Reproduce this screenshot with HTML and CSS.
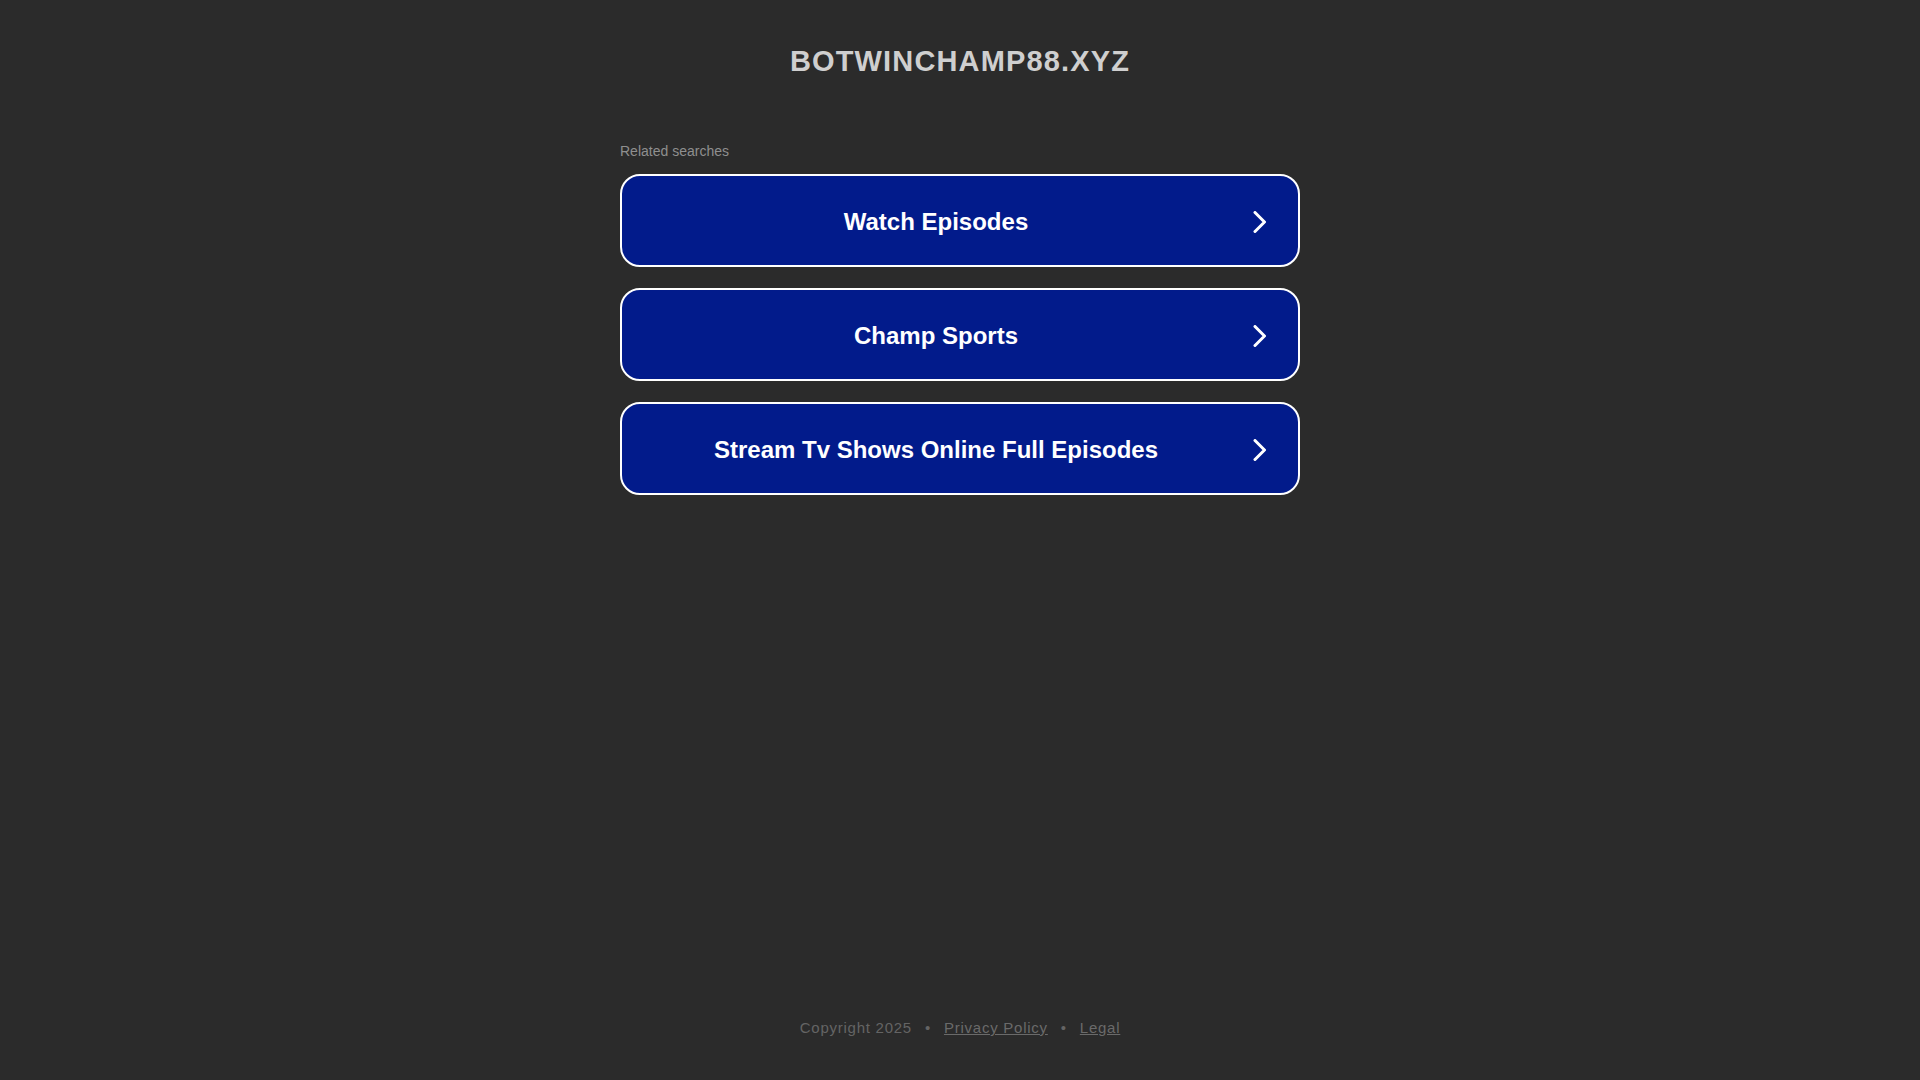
FILE: index.html
```html
<!DOCTYPE html>
<html lang="en">
<head>
<meta charset="utf-8">
<title>botwinchamp88.xyz</title>
<link rel="stylesheet" href="styles.css">
</head>
<body>
<div class="page">
  <header class="header">
    <h1 class="domain">BOTWINCHAMP88.XYZ</h1>
  </header>
  <main class="main">
    <div class="related">Related searches</div>
    <ul class="list">
      <li><a class="item" href="#"><span class="item-text">Watch Episodes</span><svg class="chev" viewBox="0 0 16 22" width="16" height="22"><path d="M3 1.5 L12.5 11 L3 20.5" fill="none" stroke="#fff" stroke-width="3" stroke-linecap="round" stroke-linejoin="round"/></svg></a></li>
      <li><a class="item" href="#"><span class="item-text">Champ Sports</span><svg class="chev" viewBox="0 0 16 22" width="16" height="22"><path d="M3 1.5 L12.5 11 L3 20.5" fill="none" stroke="#fff" stroke-width="3" stroke-linecap="round" stroke-linejoin="round"/></svg></a></li>
      <li><a class="item" href="#"><span class="item-text">Stream Tv Shows Online Full Episodes</span><svg class="chev" viewBox="0 0 16 22" width="16" height="22"><path d="M3 1.5 L12.5 11 L3 20.5" fill="none" stroke="#fff" stroke-width="3" stroke-linecap="round" stroke-linejoin="round"/></svg></a></li>
    </ul>
  </main>
  <footer class="footer">
    <span class="copy">Copyright 2025</span>
    <span class="dot">•</span>
    <a class="flink" href="#">Privacy Policy</a>
    <span class="dot">•</span>
    <a class="flink" href="#">Legal</a>
  </footer>
</div>
</body>
</html>
```
FILE: styles.css
```css
html, body {
  margin: 0;
  padding: 0;
  background: #2b2b2b;
}
body {
  font-family: "Liberation Sans", Arial, sans-serif;
}
.page {
  min-height: 100vh;
  display: flex;
  flex-direction: column;
}
.header {
  padding-top: 43px;
  text-align: center;
}
.domain {
  margin: 0;
  font-size: 29px;
  line-height: 36px;
  font-weight: bold;
  letter-spacing: 1.15px;
  color: #cfcfcf;
}
.main {
  width: 680px;
  margin: 64px auto 0;
  flex: 1;
}
.related {
  font-size: 14px;
  line-height: 16px;
  color: #8f8f8f;
  margin-bottom: 15px;
}
.list {
  list-style: none;
  margin: 0;
  padding: 0;
  display: flex;
  flex-direction: column;
  gap: 21px;
}
.item {
  display: flex;
  align-items: center;
  box-sizing: border-box;
  height: 93px;
  padding: 2px 30px 0 24px;
  background: #021b8b;
  border: 2px solid #ffffff;
  border-radius: 20px;
  text-decoration: none;
  color: #ffffff;
}
.item-text {
  flex: 1;
  text-align: center;
  font-size: 24px;
  line-height: 28px;
  font-weight: bold;
  margin-right: 26px;
}
.chev {
  flex: none;
  display: block;
}
.footer {
  display: flex;
  justify-content: center;
  align-items: center;
  padding: 0 0 43px;
  font-size: 15px;
  line-height: 18px;
  letter-spacing: 0.75px;
  color: #646464;
}
.dot {
  margin: 0 13px;
}
.flink {
  color: #6a6a6a;
  text-decoration: underline;
}
```
